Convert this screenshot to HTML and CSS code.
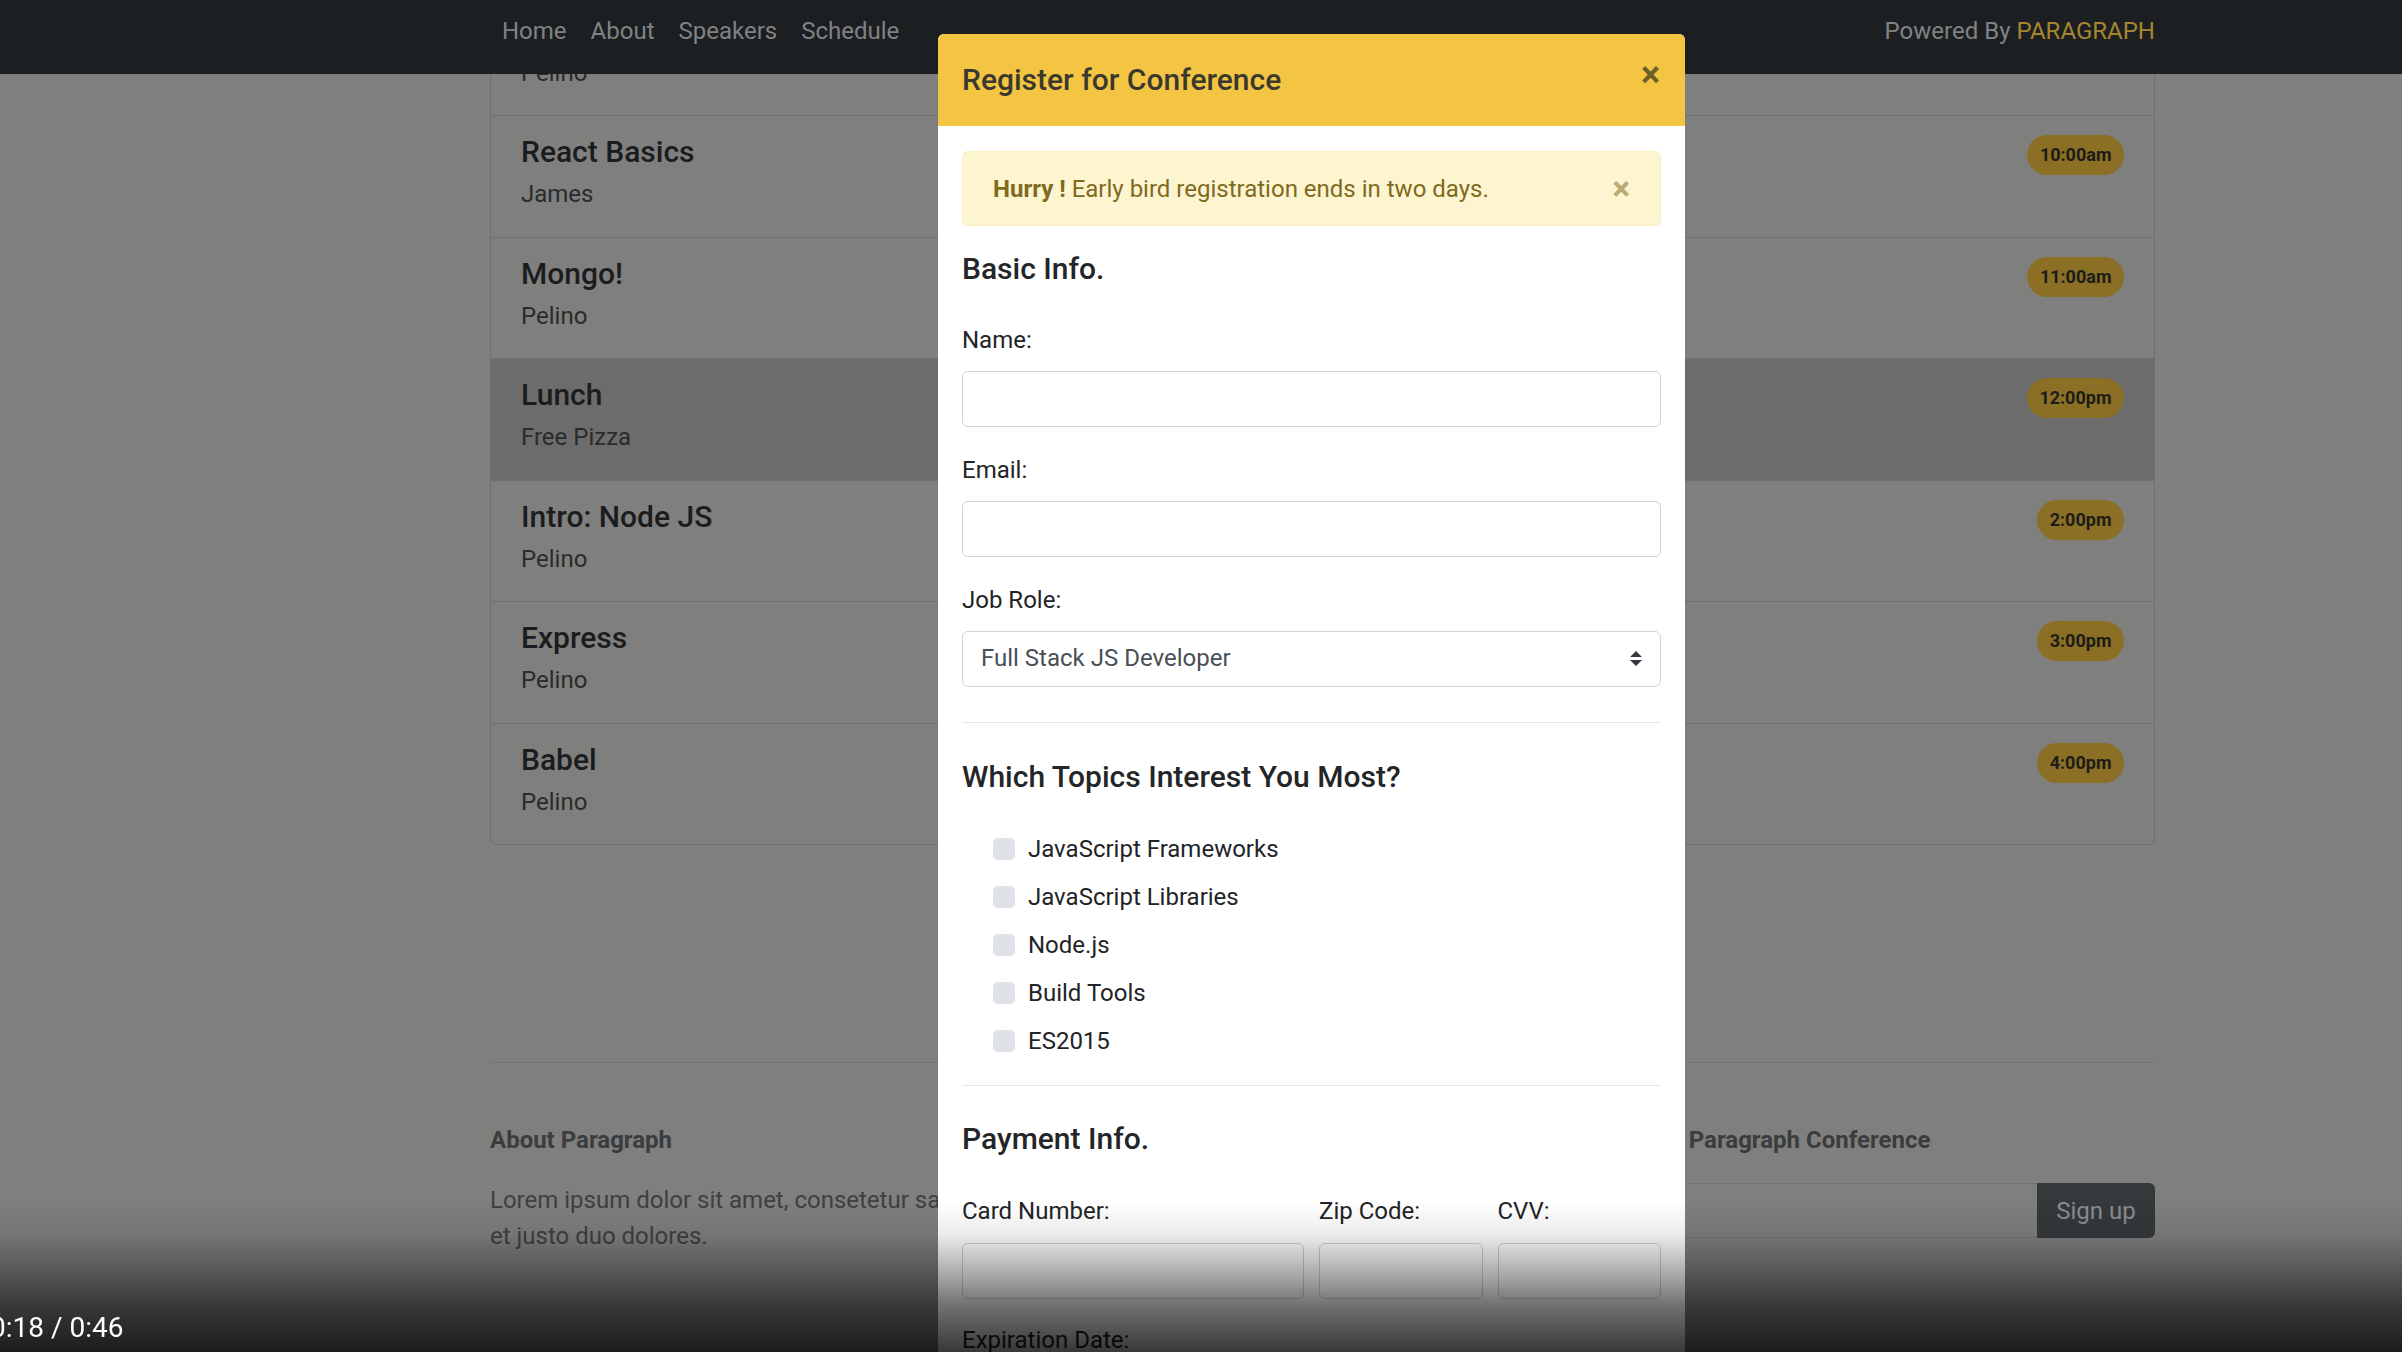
FILE: index.html
```html
<!DOCTYPE html>
<html lang="en">
<head>
<meta charset="utf-8">
<title>Paragraph Conference – Schedule</title>
<link rel="stylesheet" href="styles.css">
</head>
<body>
  <nav class="navbar">
    <div class="navbar-inner">
      <ul class="nav-links">
        <li><a href="#">Home</a></li>
        <li><a href="#">About</a></li>
        <li><a href="#">Speakers</a></li>
        <li><a href="#">Schedule</a></li>
      </ul>
      <div class="powered">Powered By <span class="brand">PARAGRAPH</span></div>
    </div>
  </nav>

  <main class="page">
    <ul class="schedule">
      <li class="session session-partial">
        <div><p class="session-speaker">Pelino</p></div>
      </li>
      <li class="session">
        <div><h5 class="session-title">React Basics</h5><p class="session-speaker">James</p></div>
        <span class="time">10:00am</span>
      </li>
      <li class="session">
        <div><h5 class="session-title">Mongo!</h5><p class="session-speaker">Pelino</p></div>
        <span class="time">11:00am</span>
      </li>
      <li class="session is-break">
        <div><h5 class="session-title">Lunch</h5><p class="session-speaker">Free Pizza</p></div>
        <span class="time">12:00pm</span>
      </li>
      <li class="session">
        <div><h5 class="session-title">Intro: Node JS</h5><p class="session-speaker">Pelino</p></div>
        <span class="time">2:00pm</span>
      </li>
      <li class="session">
        <div><h5 class="session-title">Express</h5><p class="session-speaker">Pelino</p></div>
        <span class="time">3:00pm</span>
      </li>
      <li class="session">
        <div><h5 class="session-title">Babel</h5><p class="session-speaker">Pelino</p></div>
        <span class="time">4:00pm</span>
      </li>
    </ul>

    <hr class="footer-rule">

    <footer class="footer">
      <div class="about">
        <h3 class="footer-heading">About Paragraph</h3>
        <p class="about-text">Lorem ipsum dolor sit amet, consetetur sadipscing elitr, sed diam nonumy eirmod tempor invidunt<br>et justo duo dolores.</p>
      </div>
      <div class="join">
        <h3 class="footer-heading">Join Paragraph Conference</h3>
        <form class="signup">
          <input type="email" aria-label="Email">
          <button type="button">Sign up</button>
        </form>
      </div>
    </footer>
  </main>

  <div class="modal" role="dialog">
    <div class="modal-header">
      <h5 class="modal-title">Register for Conference</h5>
      <button type="button" class="modal-close" aria-label="Close">&times;</button>
    </div>
    <div class="modal-body">
      <div class="alert">
        <span><strong>Hurry !</strong> Early bird registration ends in two days.</span>
        <button type="button" class="alert-close" aria-label="Close">&times;</button>
      </div>

      <h5 class="form-section">Basic Info.</h5>
      <div class="field">
        <label for="name">Name:</label>
        <input id="name" class="form-control" type="text">
      </div>
      <div class="field">
        <label for="email">Email:</label>
        <input id="email" class="form-control" type="email">
      </div>
      <div class="field field-last">
        <label for="role">Job Role:</label>
        <div class="select-wrap">
          <select id="role" class="form-control">
            <option>Full Stack JS Developer</option>
          </select>
          <svg class="select-arrow" viewBox="0 0 4 5" width="12" height="15" aria-hidden="true"><path d="M2 0L0 2h4zm0 5L0 3h4z" fill="#343a40"/></svg>
        </div>
      </div>

      <hr class="divider divider-top">

      <h5 class="form-section topics-heading">Which Topics Interest You Most?</h5>
      <ul class="topics">
        <li><label class="check"><input type="checkbox"><span>JavaScript Frameworks</span></label></li>
        <li><label class="check"><input type="checkbox"><span>JavaScript Libraries</span></label></li>
        <li><label class="check"><input type="checkbox"><span>Node.js</span></label></li>
        <li><label class="check"><input type="checkbox"><span>Build Tools</span></label></li>
        <li><label class="check"><input type="checkbox"><span>ES2015</span></label></li>
      </ul>

      <hr class="divider divider-bottom">

      <h5 class="form-section payment-heading">Payment Info.</h5>
      <div class="payment-row">
        <div><label for="card" class="pay-label">Card Number:</label><input id="card" class="form-control" type="text"></div>
        <div><label for="zip" class="pay-label">Zip Code:</label><input id="zip" class="form-control" type="text"></div>
        <div><label for="cvv" class="pay-label">CVV:</label><input id="cvv" class="form-control" type="text"></div>
      </div>
      <label class="exp-label">Expiration Date:</label>
    </div>
  </div>

  <div class="video-shade">
    <span class="timestamp">0:18 / 0:46</span>
  </div>
</body>
</html>
```

FILE: styles.css
```css
* { box-sizing: border-box; }

html, body {
  margin: 0;
  height: 1352px;
  overflow: hidden;
}

body {
  position: relative;
  background: #7f7f7e;
  font-family: Roboto, "Noto Sans", "Liberation Sans", sans-serif;
  font-size: 24px;
  line-height: 36px;
  color: #1c1d1e;
}

/* ---------- navbar ---------- */
.navbar {
  position: fixed;
  top: 0;
  left: 0;
  right: 0;
  height: 74px;
  background: #1c1f21;
  z-index: 10;
}
.navbar-inner {
  margin-left: 490px;
  width: 1665px;
  display: flex;
  justify-content: space-between;
  padding-top: 13px;
}
.nav-links {
  display: flex;
  list-style: none;
  margin: 0;
  padding: 0;
}
.nav-links a {
  display: block;
  padding: 0 12px;
  color: #808283;
  text-decoration: none;
}
.powered { color: #808283; }
.powered .brand { color: #a5862f; }

/* ---------- schedule ---------- */
.page {
  margin: -6.5px 0 0 490px;
  width: 1665px;
}
.schedule {
  list-style: none;
  margin: 0;
  padding: 0;
  border: 1px solid #6f6f6e;
  border-radius: 6px;
}
.session {
  display: flex;
  justify-content: space-between;
  align-items: flex-start;
  padding: 18px 30px 24.5px;
  border-bottom: 1px solid #6f6f6e;
}
.session-partial { padding-top: 60px; }
.session:last-child { border-bottom: 0; }
.session.is-break { background: #6b6c6b; }
.session-title {
  margin: 0 0 6px;
  font-size: 30px;
  font-weight: 500;
  line-height: 36px;
  color: #1b1c1d;
}
.session-speaker {
  margin: 0;
  color: #2a2b2c;
}
.time {
  display: inline-flex;
  align-items: center;
  height: 40px;
  margin-top: 1px;
  padding: 0 12.5px;
  border-radius: 20px;
  background: #8a6f25;
  color: #1d1c18;
  font-size: 18px;
  font-weight: 700;
  line-height: 1;
}

/* ---------- footer ---------- */
.footer-rule {
  margin: 217px 0 0;
  border: 0;
  border-top: 1px solid #727271;
}
.footer {
  display: grid;
  grid-template-columns: 1fr 519px;
  column-gap: 30px;
  padding-top: 59px;
}
.footer-heading {
  margin: 0 0 24px;
  font-size: 24px;
  font-weight: 700;
  line-height: 36px;
  color: #3a3c3e;
}
.about-text {
  margin: 0;
  color: #3e4042;
}
.join .footer-heading { margin-bottom: 25px; }
.signup {
  display: flex;
  height: 55px;
  margin: 0;
}
.signup input {
  flex: 1;
  min-width: 0;
  background: transparent;
  border: 1px solid #737372;
  border-right: 0;
  border-radius: 6px 0 0 6px;
}
.signup button {
  width: 118px;
  border: 0;
  border-radius: 0 6px 6px 0;
  background: #35393c;
  color: #8b8e90;
  font: inherit;
}

/* ---------- modal ---------- */
.modal {
  position: absolute;
  left: 938px;
  top: 34px;
  width: 747px;
  height: 1400px;
  background: #fff;
  border-radius: 6px 6px 0 0;
  z-index: 20;
  color: #222427;
}
.modal-header {
  height: 92px;
  padding: 0 24px;
  display: flex;
  align-items: center;
  justify-content: space-between;
  background: #f4c542;
  border-radius: 6px 6px 0 0;
}
.modal-title {
  margin: 0;
  font-size: 30px;
  font-weight: 500;
  line-height: 36px;
  color: #3b392f;
}
.modal-close {
  margin: -10px 1px 0 0;
  padding: 0;
  border: 0;
  background: none;
  font-family: inherit;
  font-size: 36px;
  font-weight: 700;
  line-height: 1;
  color: #6d5f27;
}
.modal-body {
  padding: 25px 24px 0;
}

.alert {
  display: flex;
  align-items: center;
  justify-content: space-between;
  height: 75px;
  margin-bottom: 25px;
  padding: 0 30px;
  background: #fdf4d0;
  border: 1px solid #fcefc2;
  border-radius: 6px;
  color: #7f6a1e;
}
.alert strong { font-weight: 700; }
.alert-close {
  padding: 0;
  border: 0;
  background: none;
  font-family: inherit;
  font-size: 33px;
  font-weight: 700;
  line-height: 1;
  color: #b8aa70;
}

.form-section {
  margin: 0 0 35px;
  font-size: 30px;
  font-weight: 500;
  line-height: 36px;
  color: #232527;
}
.field { margin-bottom: 25px; }
.field-last { margin-bottom: 0; }
.field label {
  display: block;
  margin-bottom: 13px;
}
.form-control {
  display: block;
  width: 100%;
  height: 56px;
  padding: 0 18px;
  border: 1px solid #ced4da;
  border-radius: 6px;
  background: #fff;
  font: inherit;
  color: #495057;
}
.select-wrap { position: relative; }
select.form-control {
  appearance: none;
  -webkit-appearance: none;
  padding-bottom: 3px;
}
.select-arrow {
  position: absolute;
  right: 19px;
  top: 20px;
}

.divider {
  margin: 0;
  border: 0;
  border-top: 1px solid #e6e6e6;
}
.divider-top { margin-top: 35px; }
.topics-heading { margin: 36px 0 36px; }
.topics {
  list-style: none;
  margin: 0;
  padding: 0 0 0 31px;
  display: flex;
  flex-direction: column;
  gap: 12px;
}
.check {
  display: flex;
  align-items: center;
  gap: 13px;
  color: #222427;
}
.check input {
  appearance: none;
  -webkit-appearance: none;
  width: 22px;
  height: 22px;
  margin: 0;
  border-radius: 5px;
  background: #dee2e6;
}
.divider-bottom { margin-top: 26px; }
.payment-heading { margin: 35px 0 36px; }
.payment-row {
  display: grid;
  grid-template-columns: calc(50% - 7.5px) 1fr 1fr;
  column-gap: 15px;
}
.pay-label {
  display: block;
  margin-bottom: 14px;
}
.exp-label {
  display: block;
  margin-top: 23px;
}

/* ---------- video overlay ---------- */
.video-shade {
  position: absolute;
  left: 0;
  right: 0;
  bottom: 0;
  height: 150px;
  z-index: 30;
  pointer-events: none;
  background: linear-gradient(to bottom,
    rgba(0, 0, 0, 0) 0%,
    rgba(0, 0, 0, 0.08) 22%,
    rgba(0, 0, 0, 0.3) 45%,
    rgba(0, 0, 0, 0.55) 68%,
    rgba(0, 0, 0, 0.78) 100%);
}
.timestamp {
  position: absolute;
  left: -10px;
  bottom: 10px;
  color: #fff;
  font-family: Roboto, "Liberation Sans", sans-serif;
  font-size: 28px;
  line-height: 28px;
  white-space: nowrap;
}
```
